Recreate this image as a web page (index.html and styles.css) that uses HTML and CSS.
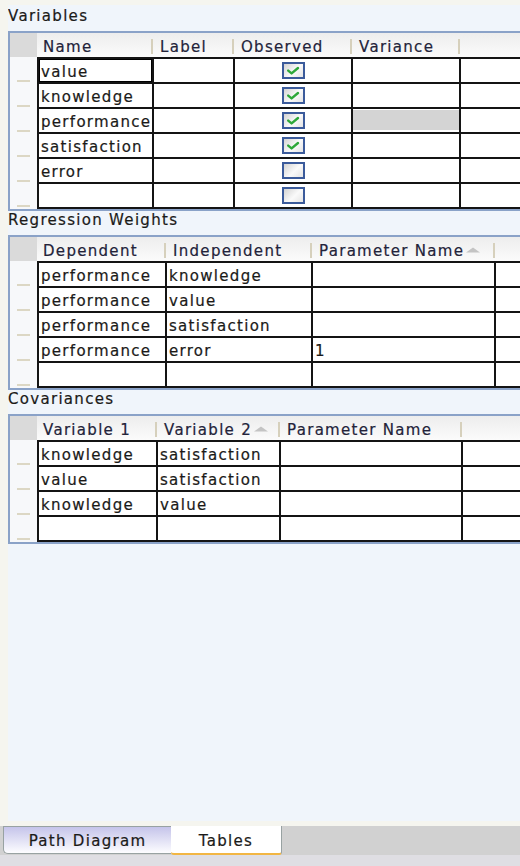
FILE: index.html
```html
<!DOCTYPE html>
<html>
<head>
<meta charset="utf-8">
<title>Tables</title>
<link rel="stylesheet" href="styles.css">
</head>
<body>
<div class="app">
  <main class="panel">
    <h2 class="group-title">Variables</h2>
    <div class="grid grid-vars">
      <div class="head">
        <div class="corner"></div>
        <div class="hcell"><span>Name</span><i class="sep"></i></div>
        <div class="hcell"><span>Label</span><i class="sep"></i></div>
        <div class="hcell"><span>Observed</span><i class="sep"></i></div>
        <div class="hcell"><span>Variance</span><i class="sep"></i></div>
        <div class="hcell"></div>
      </div>
      <div class="row">
        <div class="gutter"><i class="dash"></i></div>
        <div class="cell focus">value</div>
        <div class="cell"></div>
        <div class="cell check"><span class="cbox"><svg width="14" height="9" viewBox="0 0 14 9"><path d="M2.2 4.6 L5.6 7.4 L12 2" fill="none" stroke="#2ea83a" stroke-width="2.4" stroke-linecap="round" stroke-linejoin="round"/></svg></span></div>
        <div class="cell"></div>
        <div class="cell"></div>
      </div>
      <div class="row">
        <div class="gutter"><i class="dash"></i></div>
        <div class="cell">knowledge</div>
        <div class="cell"></div>
        <div class="cell check"><span class="cbox"><svg width="14" height="9" viewBox="0 0 14 9"><path d="M2.2 4.6 L5.6 7.4 L12 2" fill="none" stroke="#2ea83a" stroke-width="2.4" stroke-linecap="round" stroke-linejoin="round"/></svg></span></div>
        <div class="cell"></div>
        <div class="cell"></div>
      </div>
      <div class="row">
        <div class="gutter"><i class="dash"></i></div>
        <div class="cell">performance</div>
        <div class="cell"></div>
        <div class="cell check"><span class="cbox"><svg width="14" height="9" viewBox="0 0 14 9"><path d="M2.2 4.6 L5.6 7.4 L12 2" fill="none" stroke="#2ea83a" stroke-width="2.4" stroke-linecap="round" stroke-linejoin="round"/></svg></span></div>
        <div class="cell shade"><div class="fill"></div></div>
        <div class="cell"></div>
      </div>
      <div class="row">
        <div class="gutter"><i class="dash"></i></div>
        <div class="cell">satisfaction</div>
        <div class="cell"></div>
        <div class="cell check"><span class="cbox"><svg width="14" height="9" viewBox="0 0 14 9"><path d="M2.2 4.6 L5.6 7.4 L12 2" fill="none" stroke="#2ea83a" stroke-width="2.4" stroke-linecap="round" stroke-linejoin="round"/></svg></span></div>
        <div class="cell"></div>
        <div class="cell"></div>
      </div>
      <div class="row">
        <div class="gutter"><i class="dash"></i></div>
        <div class="cell">error</div>
        <div class="cell"></div>
        <div class="cell check"><span class="cbox"></span></div>
        <div class="cell"></div>
        <div class="cell"></div>
      </div>
      <div class="row">
        <div class="gutter"><i class="dash"></i></div>
        <div class="cell"></div>
        <div class="cell"></div>
        <div class="cell check"><span class="cbox"></span></div>
        <div class="cell"></div>
        <div class="cell"></div>
      </div>
    </div>

    <h2 class="group-title">Regression Weights</h2>
    <div class="grid grid-reg">
      <div class="head">
        <div class="corner"></div>
        <div class="hcell"><span>Dependent</span><i class="sep"></i></div>
        <div class="hcell"><span>Independent</span><i class="sep"></i></div>
        <div class="hcell"><span>Parameter Name</span><svg class="sort" width="16" height="6" viewBox="0 0 16 6"><path d="M1 5.5 L8 0.5 L15 5.5 Z" fill="#c4c4c4"/></svg><i class="sep"></i></div>
        <div class="hcell"></div>
      </div>
      <div class="row">
        <div class="gutter"><i class="dash"></i></div>
        <div class="cell">performance</div>
        <div class="cell">knowledge</div>
        <div class="cell"></div>
        <div class="cell"></div>
      </div>
      <div class="row">
        <div class="gutter"><i class="dash"></i></div>
        <div class="cell">performance</div>
        <div class="cell">value</div>
        <div class="cell"></div>
        <div class="cell"></div>
      </div>
      <div class="row">
        <div class="gutter"><i class="dash"></i></div>
        <div class="cell">performance</div>
        <div class="cell">satisfaction</div>
        <div class="cell"></div>
        <div class="cell"></div>
      </div>
      <div class="row">
        <div class="gutter"><i class="dash"></i></div>
        <div class="cell">performance</div>
        <div class="cell">error</div>
        <div class="cell">1</div>
        <div class="cell"></div>
      </div>
      <div class="row">
        <div class="gutter"><i class="dash"></i></div>
        <div class="cell"></div>
        <div class="cell"></div>
        <div class="cell"></div>
        <div class="cell"></div>
      </div>
    </div>

    <h2 class="group-title">Covariances</h2>
    <div class="grid grid-cov">
      <div class="head">
        <div class="corner"></div>
        <div class="hcell"><span>Variable 1</span><i class="sep"></i></div>
        <div class="hcell"><span>Variable 2</span><svg class="sort" width="16" height="6" viewBox="0 0 16 6"><path d="M1 5.5 L8 0.5 L15 5.5 Z" fill="#c4c4c4"/></svg><i class="sep"></i></div>
        <div class="hcell"><span>Parameter Name</span><i class="sep"></i></div>
        <div class="hcell"></div>
      </div>
      <div class="row">
        <div class="gutter"><i class="dash"></i></div>
        <div class="cell">knowledge</div>
        <div class="cell">satisfaction</div>
        <div class="cell"></div>
        <div class="cell"></div>
      </div>
      <div class="row">
        <div class="gutter"><i class="dash"></i></div>
        <div class="cell">value</div>
        <div class="cell">satisfaction</div>
        <div class="cell"></div>
        <div class="cell"></div>
      </div>
      <div class="row">
        <div class="gutter"><i class="dash"></i></div>
        <div class="cell">knowledge</div>
        <div class="cell">value</div>
        <div class="cell"></div>
        <div class="cell"></div>
      </div>
      <div class="row">
        <div class="gutter"><i class="dash"></i></div>
        <div class="cell"></div>
        <div class="cell"></div>
        <div class="cell"></div>
        <div class="cell"></div>
      </div>
    </div>
  </main>

  <nav class="tabbar">
    <div class="tab tab-path">Path Diagram</div>
    <div class="tab tab-tables">Tables</div>
  </nav>
  <div class="statusbar"></div>
</div>
</body>
</html>
```

FILE: styles.css
```css
html, body {
  margin: 0;
  padding: 0;
}

body {
  background: #f5f5ef;
  font-family: "DejaVu Sans", Verdana, sans-serif;
  font-size: 15px;
  letter-spacing: 1.3px;
  color: #1b1a18;
  -webkit-text-stroke: 0.2px currentColor;
  overflow: hidden;
}

.app {
  height: 866px;
  display: flex;
  flex-direction: column;
  padding-top: 5px;
  box-sizing: border-box;
}

.panel {
  flex: 1;
  min-height: 0;
  margin-left: 8px;
  padding-top: 2px;
  background: #f0f5fb;
  overflow: hidden;
}

.group-title {
  margin: 0 0 5px 0;
  font: inherit;
  font-weight: normal;
  height: 19px;
  line-height: 19px;
  white-space: nowrap;
}

.grid {
  display: grid;
  width: max-content;
  border: 2px solid #8aa2c8;
  border-right: 0;
  background: #f7f8fa;
}

.grid-vars { grid-template-columns: 27px 117px 81px 118px 108px 120px; }
.grid-reg  { grid-template-columns: 27px 130px 146px 183px 120px; }
.grid-cov  { grid-template-columns: 27px 121px 123px 182px 120px; }

.head, .row { display: contents; }

.corner {
  height: 24px;
  background: #dadada;
}

.hcell {
  box-sizing: border-box;
  height: 24px;
  display: flex;
  align-items: center;
  padding: 3px 0 0 6px;
  background: linear-gradient(#ededed, #fbfbfb);
  color: #23233a;
  white-space: nowrap;
  overflow: hidden;
}

.sep {
  flex: none;
  margin-left: auto;
  margin-right: 1px;
  width: 2px;
  height: 15px;
  background: #d6d0bc;
}

.sort {
  flex: none;
  margin-left: 1px;
  margin-top: -2px;
}

.gutter {
  display: flex;
  align-items: flex-end;
  justify-content: center;
}

.dash {
  width: 13px;
  height: 2px;
  margin-bottom: 2px;
  background: #dcd7c4;
}

.cell {
  height: 21px;
  padding: 2px 0 0 2px;
  line-height: 23px;
  border-right: 2px solid #141414;
  border-bottom: 2px solid #141414;
  background: #ffffff;
  white-space: nowrap;
  overflow: hidden;
}

.row > .cell:nth-child(2) { border-left: 2px solid #141414; }
.head + .row > .cell { border-top: 2px solid #141414; }

.cell.focus { box-shadow: inset 0 0 0 1px #000; }

.cell.check {
  height: 23px;
  display: flex;
  align-items: center;
  justify-content: center;
  padding: 0;
}

.cbox {
  width: 19px;
  height: 13px;
  border: 2px solid #3b5b9b;
  background: linear-gradient(135deg, #d3d3d3, #fafafa 55%, #e4e4e4);
  display: flex;
  align-items: center;
  justify-content: center;
}

.cell.shade {
  height: 23px;
  padding: 0;
}

.fill {
  height: 20px;
  margin-top: 1px;
  background: #d4d4d4;
}

.tabbar {
  flex: none;
  height: 29px;
  margin-top: 5px;
  padding-left: 3px;
  display: flex;
  background: #d1d1d1;
}

.tab {
  display: flex;
  align-items: center;
  justify-content: center;
  box-sizing: border-box;
  padding-top: 2px;
  white-space: nowrap;
  color: #1b1a18;
}

.tab-path {
  width: 168px;
  height: 28px;
  border: 1px solid #98a2a2;
  border-right: 0;
  border-radius: 0 0 0 5px;
  background: linear-gradient(#c5c4ea, #fdfdff);
}

.tab-tables {
  width: 111px;
  height: 29px;
  background: #ffffff;
  border-right: 1px solid #98a2a2;
  border-bottom: 2px solid #f2b643;
  border-radius: 0 0 3px 3px;
}

.statusbar {
  flex: none;
  height: 11px;
  background: #dfdee3;
}
```
